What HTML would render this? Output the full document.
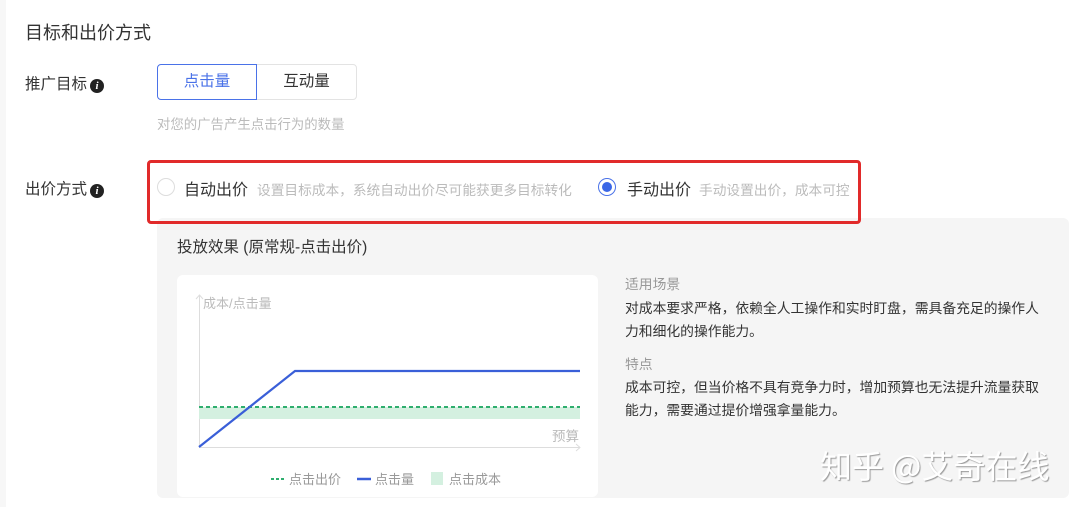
<!DOCTYPE html>
<html><head><meta charset="utf-8"><style>
*{margin:0;padding:0;box-sizing:border-box}
body{width:1080px;height:507px;background:#fff;position:relative;overflow:hidden;font-family:"Liberation Sans","Noto Sans CJK SC",sans-serif;color:#333}
.a{position:absolute;white-space:nowrap}
.info{display:inline-block;width:14px;height:14px;border-radius:50%;background:#222;color:#fff;font-size:11px;line-height:14px;text-align:center;font-style:italic;font-weight:bold;vertical-align:0px;margin-left:3px;font-family:"Liberation Serif",serif}
.g{color:#bbb;font-size:13.7px}
.rt{font-size:13.8px;line-height:23px;color:#333}
</style></head><body>
<div style="position:absolute;left:0;top:0;width:6px;height:507px;background:#f7f7f7"></div>
<div class="a" style="left:25px;top:19px;font-size:18px;color:#333">目标和出价方式</div>
<div class="a" style="left:25px;top:72px;font-size:15.5px">推广目标<span class="info">i</span></div>
<div class="a" style="left:157px;top:64px;width:100px;height:36px;border:1px solid #4a72e8;border-radius:4px 0 0 4px;color:#4a72e8;font-size:15.5px;text-align:center;line-height:34px;z-index:2">点击量</div>
<div class="a" style="left:256px;top:64px;width:101px;height:36px;border:1px solid #e3e3e3;border-radius:0 4px 4px 0;font-size:15.5px;text-align:center;line-height:34px">互动量</div>
<div class="a g" style="left:157px;top:113px;font-size:13.4px">对您的广告产生点击行为的数量</div>
<div class="a" style="left:25px;top:177px;font-size:15.5px">出价方式<span class="info">i</span></div>
<div class="a" style="left:147px;top:160px;width:714px;height:64px;border:3px solid #e12a2a;border-radius:4px;z-index:3"></div>
<div class="a" style="left:157px;top:178px;width:18px;height:18px;border:1px solid #ddd;border-radius:50%"></div>
<div class="a" style="left:184px;top:176px;font-size:16px">自动出价</div>
<div class="a g" style="left:257px;top:179px">设置目标成本，系统自动出价尽可能获更多目标转化</div>
<div class="a" style="left:598px;top:178px;width:18px;height:18px;border:1px solid #4a72e8;border-radius:50%"><div style="margin:3px;width:10px;height:10px;border-radius:50%;background:#3a66e6"></div></div>
<div class="a" style="left:627px;top:176px;font-size:16px">手动出价</div>
<div class="a g" style="left:699px;top:179px">手动设置出价，成本可控</div>
<div class="a" style="left:157px;top:218px;width:912px;height:280px;background:#f5f5f5;border-radius:6px"></div>
<div class="a" style="left:177px;top:235px;font-size:15.5px">投放效果 (原常规-点击出价)</div>
<div class="a" style="left:177px;top:275px;width:421px;height:222px;background:#fff;border-radius:6px"></div>
<svg class="a" style="left:0;top:0" width="1080" height="507">
<g stroke="#ddd" stroke-width="1" fill="none">
<path d="M199.5 447V295M196 299l3.5-4 3.5 4"/>
<path d="M199 447.5H580M576 444l4 3.5-4 3.5"/>
</g>
<rect x="199" y="407" width="381" height="12" fill="#d4f0e0"/>
<path d="M199 407H580" stroke="#2fae6e" stroke-width="2" stroke-dasharray="4 3"/>
<path d="M199 447L295 371H580" stroke="#3a5fd8" stroke-width="2.2" fill="none"/>
<text x="203" y="308" font-size="13" fill="#bbb" font-family="Liberation Sans,Noto Sans CJK SC,sans-serif">成本/点击量</text>
<text x="552" y="441" font-size="13.5" fill="#bbb" font-family="Liberation Sans,Noto Sans CJK SC,sans-serif">预算</text>
<path d="M271 479H285" stroke="#2fae6e" stroke-width="2" stroke-dasharray="3 2"/>
<text x="289" y="484" font-size="13" fill="#999" font-family="Liberation Sans,Noto Sans CJK SC,sans-serif">点击出价</text>
<path d="M357 479H371" stroke="#3a5fd8" stroke-width="2.5"/>
<text x="375" y="484" font-size="13" fill="#999" font-family="Liberation Sans,Noto Sans CJK SC,sans-serif">点击量</text>
<rect x="431" y="472" width="12" height="13" fill="#d4f0e0"/>
<text x="449" y="484" font-size="13" fill="#999" font-family="Liberation Sans,Noto Sans CJK SC,sans-serif">点击成本</text>
</svg>
<div class="a rt" style="left:625px;top:273px;color:#999">适用场景</div>
<div class="a rt" style="left:625px;top:297px">对成本要求严格，依赖全人工操作和实时盯盘，需具备充足的操作人</div>
<div class="a rt" style="left:625px;top:320px">力和细化的操作能力。</div>
<div class="a rt" style="left:625px;top:353px;color:#999">特点</div>
<div class="a rt" style="left:625px;top:376px">成本可控，但当价格不具有竞争力时，增加预算也无法提升流量获取</div>
<div class="a rt" style="left:625px;top:399px">能力，需要通过提价增强拿量能力。</div>
<div class="a" style="left:820px;top:442px;font-size:32px;color:#fff;text-shadow:1px 1px 1px #999;font-family:'Noto Sans CJK SC',sans-serif">知乎 @艾奇在线</div>
</body></html>
